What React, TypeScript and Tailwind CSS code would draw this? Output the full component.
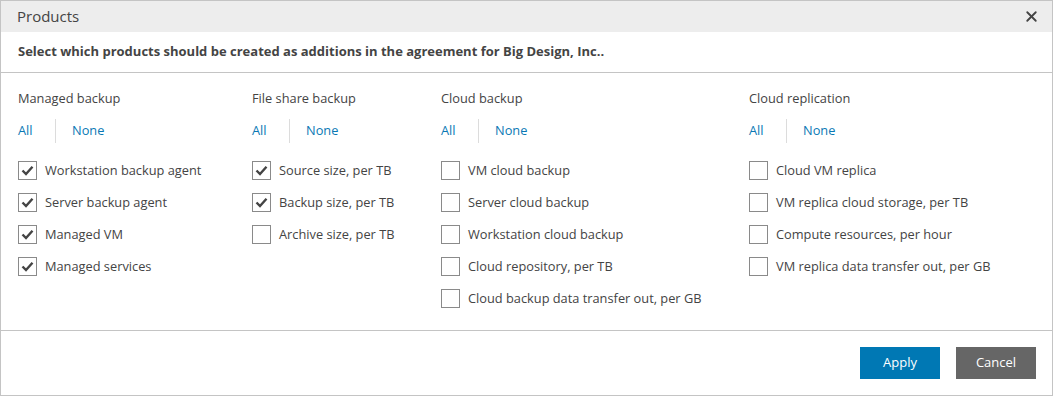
import { X } from "lucide-react";

type Group = {
  title: string;
  width: string;
  items: { label: string; checked: boolean }[];
};

const groups: Group[] = [
  {
    title: "Managed backup",
    width: "w-[234px]",
    items: [
      { label: "Workstation backup agent", checked: true },
      { label: "Server backup agent", checked: true },
      { label: "Managed VM", checked: true },
      { label: "Managed services", checked: true },
    ],
  },
  {
    title: "File share backup",
    width: "w-[189px]",
    items: [
      { label: "Source size, per TB", checked: true },
      { label: "Backup size, per TB", checked: true },
      { label: "Archive size, per TB", checked: false },
    ],
  },
  {
    title: "Cloud backup",
    width: "w-[308px]",
    items: [
      { label: "VM cloud backup", checked: false },
      { label: "Server cloud backup", checked: false },
      { label: "Workstation cloud backup", checked: false },
      { label: "Cloud repository, per TB", checked: false },
      { label: "Cloud backup data transfer out, per GB", checked: false },
    ],
  },
  {
    title: "Cloud replication",
    width: "flex-1",
    items: [
      { label: "Cloud VM replica", checked: false },
      { label: "VM replica cloud storage, per TB", checked: false },
      { label: "Compute resources, per hour", checked: false },
      { label: "VM replica data transfer out, per GB", checked: false },
    ],
  },
];

function Checkbox({ checked }: { checked: boolean }) {
  return (
    <div className="w-[19px] h-[19px] border border-[#8a8a8a] bg-white flex items-center justify-center shrink-0">
      {checked && (
        <svg width="13" height="11" viewBox="0 0 13 11">
          <path d="M1.5 5.5 L5 9 L11.5 1.8" fill="none" stroke="#444" strokeWidth="2.4" />
        </svg>
      )}
    </div>
  );
}

export default function App() {
  return (
    <div
      className="w-[1053px] h-[396px] border border-[#c4c4c4] bg-white flex flex-col text-[#444] text-[12.8px]"
      style={{ fontFamily: '"Open Sans", "Noto Sans", sans-serif' }}
    >
      {/* Header */}
      <div className="h-[31px] bg-[#ededed] flex items-center justify-between pl-[16px] pr-[12px] shrink-0">
        <span className="text-[15px] text-[#444]">Products</span>
        <X size={17} strokeWidth={2.6} color="#444" />
      </div>

      {/* Subtitle */}
      <div className="h-[41px] border-b border-[#c4c4c4] flex items-center pl-[17px] shrink-0">
        <span className="font-bold text-[13px] text-[#444]">
          Select which products should be created as additions in the agreement for Big Design, Inc..
        </span>
      </div>

      {/* Groups */}
      <div className="h-[258px] border-b border-[#c4c4c4] flex pl-[17px] pt-[16px] shrink-0">
        {groups.map((g) => (
          <div key={g.title} className={g.width}>
            <div className="h-[18px] leading-[18px]">{g.title}</div>
            <div className="flex items-center mt-[12px] h-[24px]">
              <span className="text-[#0a78b4] w-[37px]">All</span>
              <div className="w-px h-[24px] bg-[#dcdcdc]" />
              <span className="text-[#0a78b4] ml-[16px]">None</span>
            </div>
            <div className="flex flex-col gap-[13px] mt-[18px]">
              {g.items.map((it) => (
                <div key={it.label} className="flex items-center gap-[8px] h-[19px]">
                  <Checkbox checked={it.checked} />
                  <span className="whitespace-nowrap">{it.label}</span>
                </div>
              ))}
            </div>
          </div>
        ))}
      </div>

      {/* Footer */}
      <div className="flex-1 flex items-center justify-end gap-[16px] pr-[16px]">
        <button className="w-[80px] h-[32px] bg-[#0078b4] text-white text-[13px]">Apply</button>
        <button className="w-[80px] h-[32px] bg-[#666666] text-white text-[13px]">Cancel</button>
      </div>
    </div>
  );
}
